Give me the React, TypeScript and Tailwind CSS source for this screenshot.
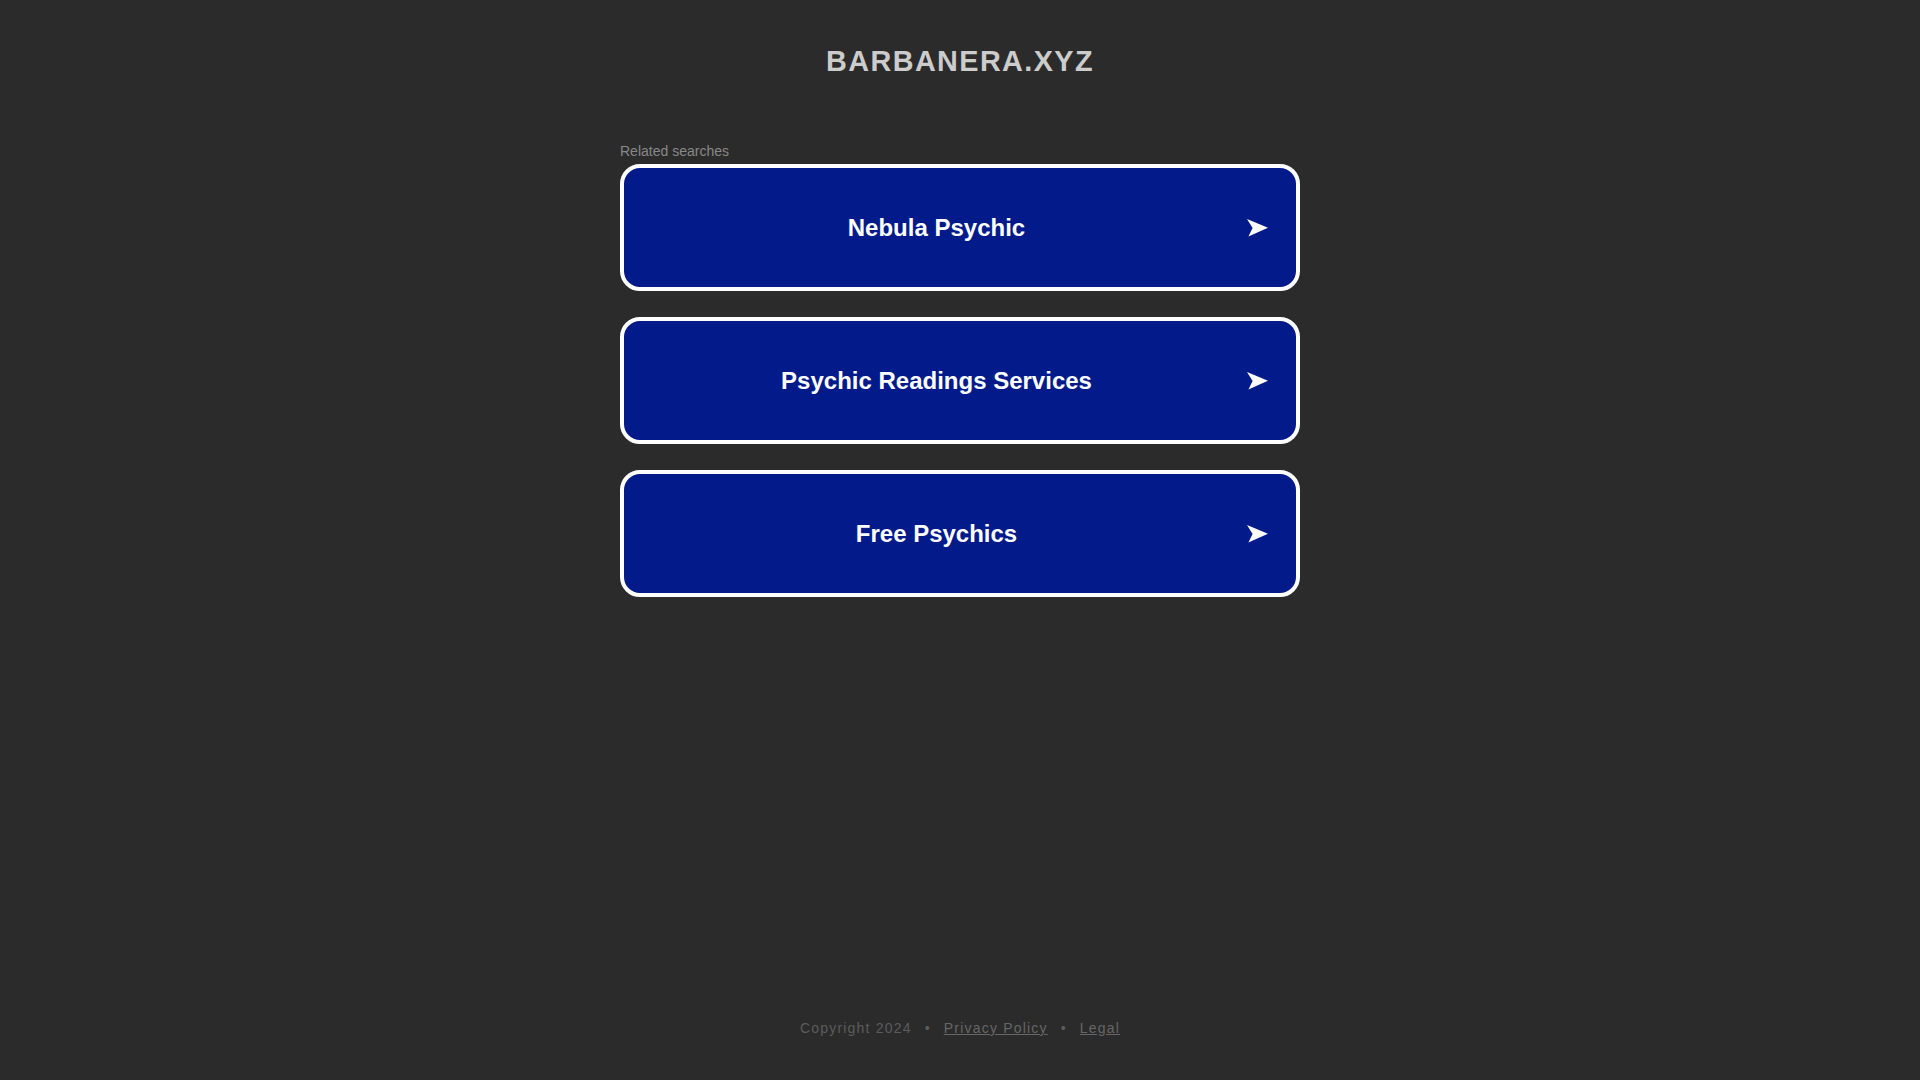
const searches = ['Nebula Psychic', 'Psychic Readings Services', 'Free Psychics'];

function ArrowHead() {
  return (
    <svg width="21" height="18" viewBox="0 0 21 18" className="mr-[28px] shrink-0">
      <polygon points="0,0 21,8.8 1.4,17.6 5.6,9" fill="#ffffff" />
    </svg>
  );
}

function SearchCard({ label }: { label: string }) {
  return (
    <a
      href="#"
      className="flex h-[127px] items-center rounded-[20px] border-[4px] border-white bg-[#021a8a] text-white no-underline"
    >
      <span className="flex-1 pl-[2px] text-center text-[24px] font-bold leading-[28px]">{label}</span>
      <ArrowHead />
    </a>
  );
}

export default function App() {
  return (
    <div className="flex min-h-screen flex-col items-center bg-[#2b2b2b] font-['Liberation_Sans',Arial,sans-serif]">
      <h1 className="mt-[45px] text-[28.8px] font-bold leading-[33px] tracking-[1.4px] text-[#cccccc]">
        BARBANERA.XYZ
      </h1>

      <div className="mt-[65px] w-[680px]">
        <div className="text-[14px] leading-[16px] text-[#888888]">Related searches</div>
        <div className="mt-[5px] flex flex-col gap-[26px]">
          {searches.map((s) => (
            <SearchCard key={s} label={s} />
          ))}
        </div>
      </div>

      <footer className="mt-auto mb-[44px] flex items-center text-[14px] leading-[16px] tracking-[1.2px] text-[#5c5c5c]">
        <span>Copyright 2024</span>
        <span className="px-[13px]">•</span>
        <a href="#" className="text-[#666666] underline">
          Privacy Policy
        </a>
        <span className="px-[13px]">•</span>
        <a href="#" className="text-[#666666] underline">
          Legal
        </a>
      </footer>
    </div>
  );
}
